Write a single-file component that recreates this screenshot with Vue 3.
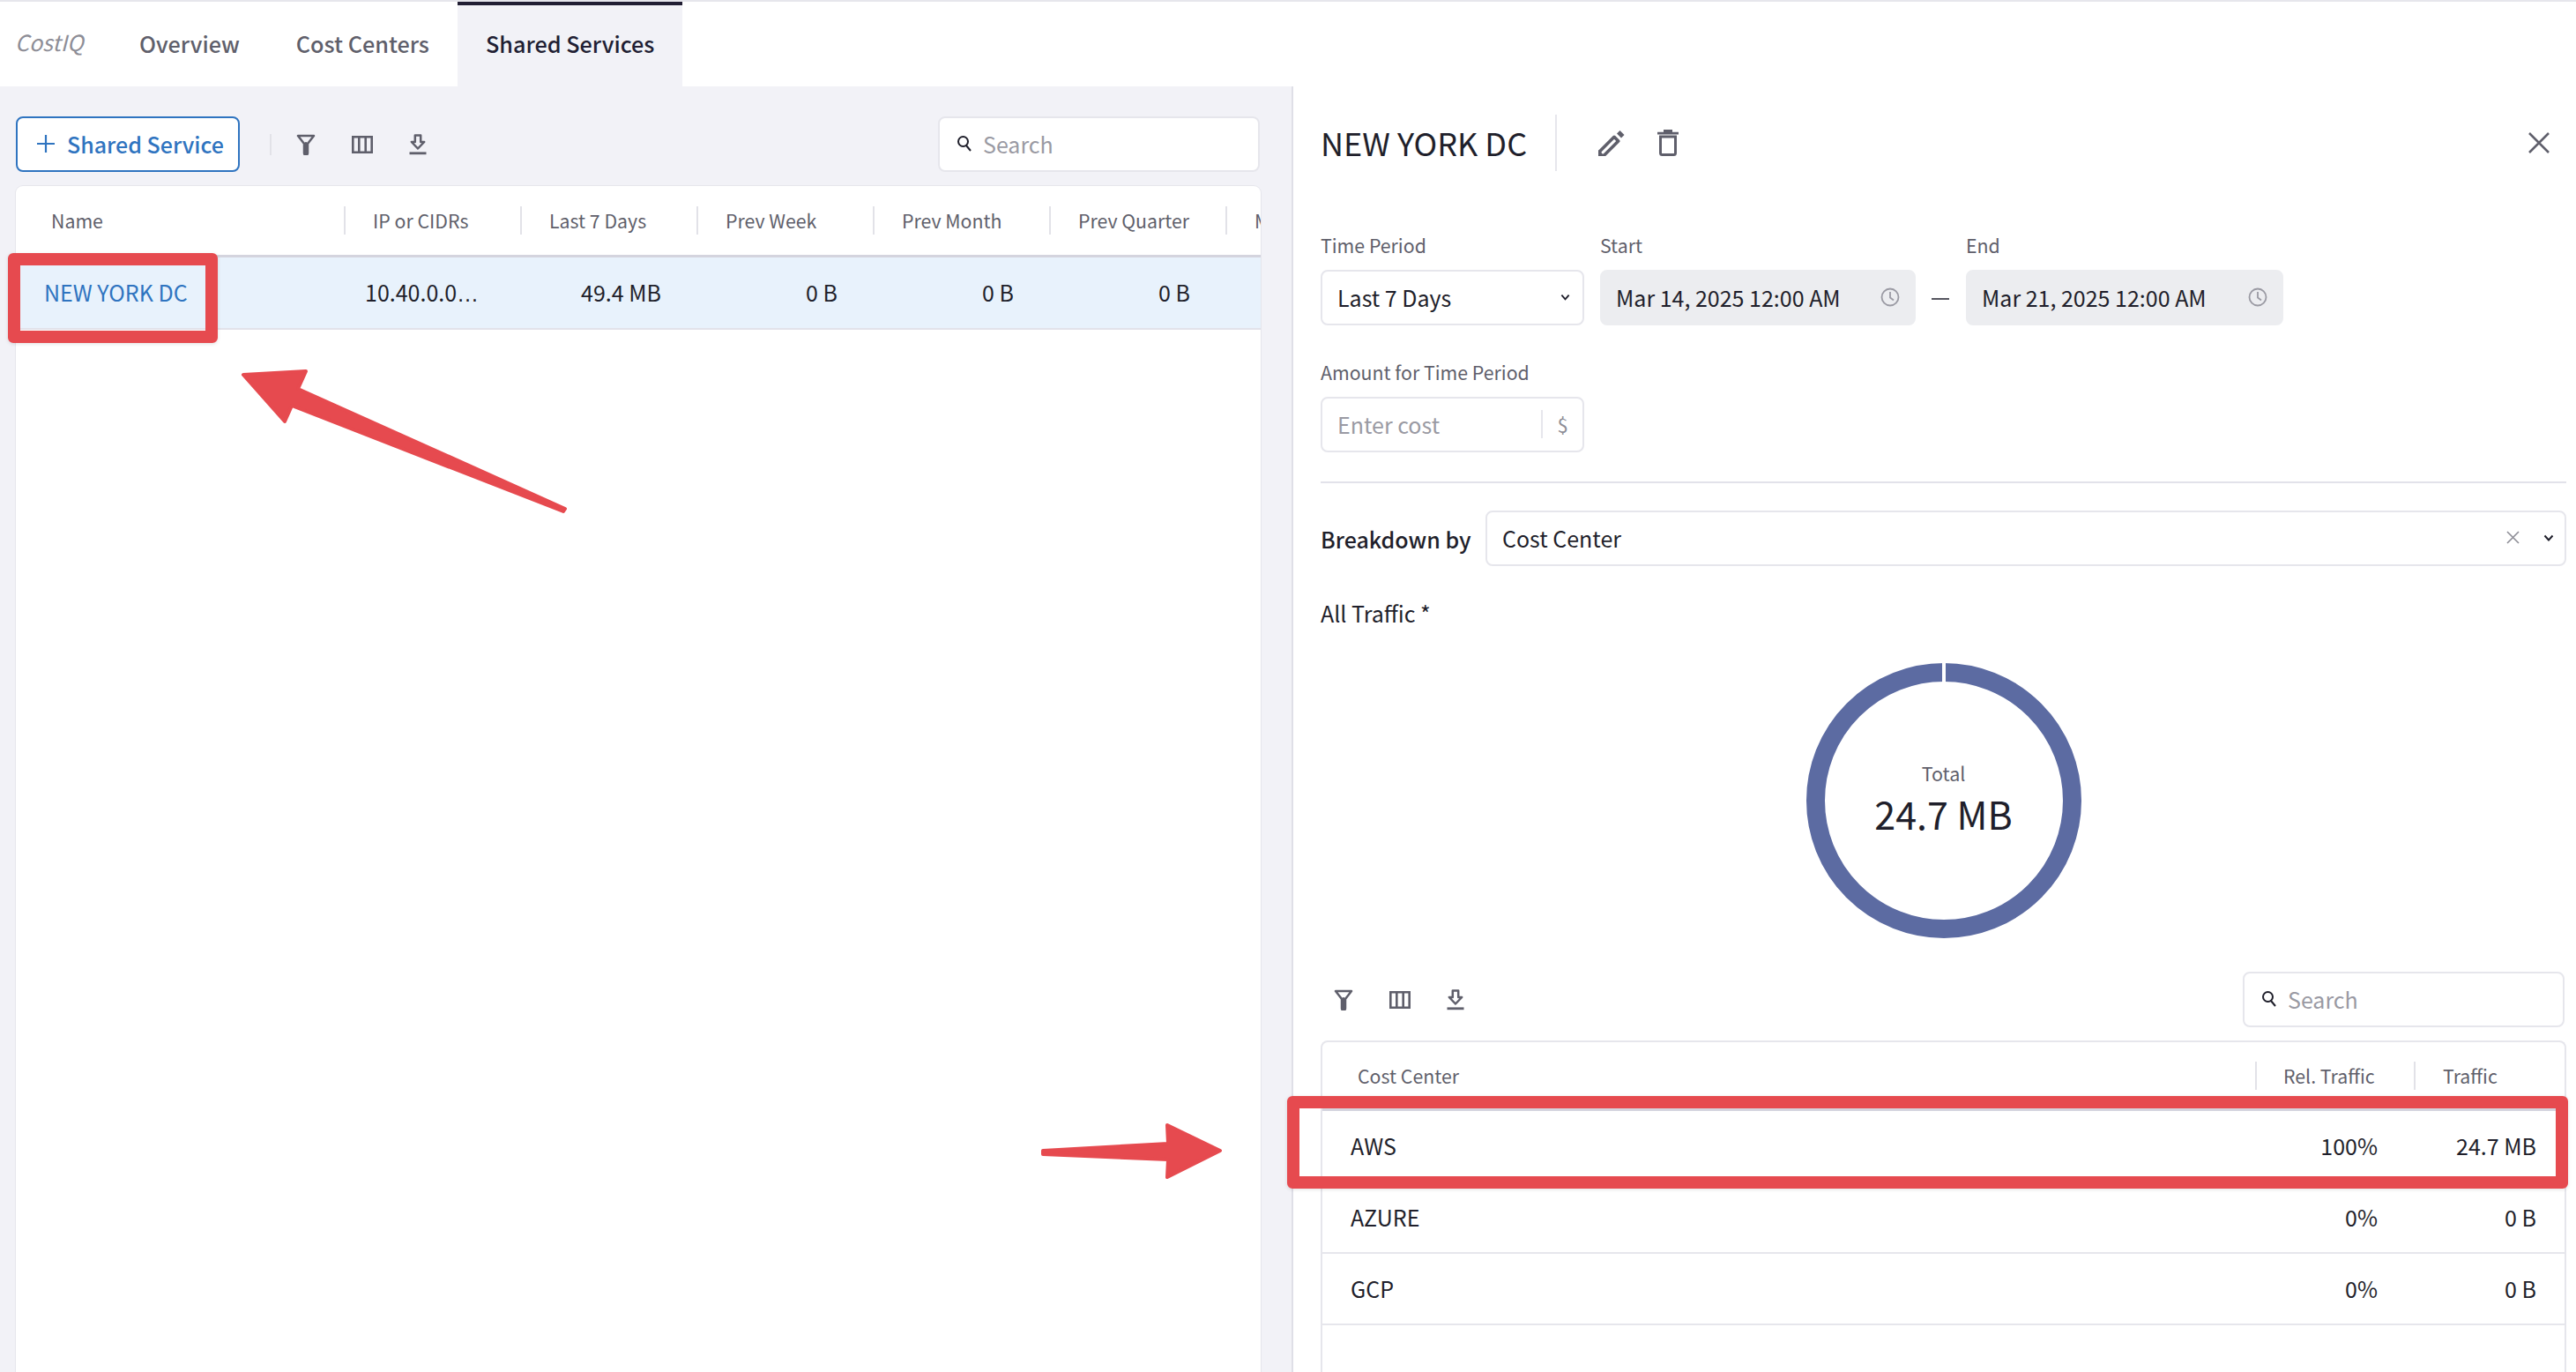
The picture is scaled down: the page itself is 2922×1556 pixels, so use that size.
<template>
  <div class="page">
    <nav class="nav">
      <span class="brand">CostIQ</span>
      <a
        v-for="tab in tabs"
        :key="tab"
        class="tab"
        :class="{ active: tab === 'Shared Services' }"
      >{{ tab }}</a>
    </nav>

    <div class="body">
      <section class="left">
        <div class="toolbar">
          <button class="add-btn">
            <svg width="20" height="20" viewBox="0 0 20 20"><path d="M10 0v20M0 10h20" stroke="#2f74c0" stroke-width="2.200" /></svg>
            <span>Shared Service</span>
          </button>
          <span class="tool-divider"></span>
          <div class="tools">
            <svg class="tool" width="22" height="24" viewBox="0 0 22 24"><path d="M2 2h18l-7 9v10.500a2 2 0 0 1-4 0V11z" fill="none" stroke="#5f5f6b" stroke-width="2.500" stroke-linejoin="round" /><path d="M11 11v11" stroke="#5f5f6b" stroke-width="4" stroke-linecap="round" /></svg>
            <svg class="tool" width="24" height="20" viewBox="0 0 24 20"><path d="M1.300 1.300h21.400v17.400H1.300zM8.300 1v18M15.700 1v18" fill="none" stroke="#5f5f6b" stroke-width="2.600" /></svg>
            <svg class="tool" width="20" height="24" viewBox="0 0 20 24"><path d="M6.800 1.500h6.400v7.500h4L10 16.500 2.800 9h4z" fill="none" stroke="#5f5f6b" stroke-width="2.500" stroke-linejoin="round" /><path d="M0.500 21.800h19" stroke="#5f5f6b" stroke-width="2.800" /></svg>
          </div>
          <div class="search filled">
            <svg width="18" height="20" viewBox="0 0 18 20"><circle cx="7.500" cy="7.500" r="5.500" fill="none" stroke="#1f1f2b" stroke-width="2" /><path d="M11 12l5 6" stroke="#1f1f2b" stroke-width="2" /></svg>
            <span>Search</span>
          </div>
        </div>

        <div class="services">
          <div class="services-head">
            <div v-for="col in serviceCols" :key="col" class="svc-col">{{ col }}</div>
          </div>
          <div class="services-row">
            <div class="svc-name"><a>NEW YORK DC</a><span class="mark mark-name"></span></div>
            <div class="svc-ip">10.40.0.0<span class="ellipsis">…</span></div>
            <div v-for="(v, i) in serviceValues" :key="i" class="svc-val">{{ v }}</div>
          </div>
        </div>
      </section>

      <section class="right">
        <header class="title-row">
          <h1>NEW YORK DC</h1>
          <span class="title-divider"></span>
          <svg class="pencil" width="30" height="30" viewBox="0 0 30 30"><path d="M1.800 24.500L18 8.300l4.700 4.700L6.500 29.200 1.800 29.200z" fill="none" stroke="#5f5f6b" stroke-width="3.600" stroke-linejoin="round" /><path d="M0 30v-7l7 7z" fill="#5f5f6b" /><path d="M21 4.500L24.500 1 29.500 6 26 9.500z" fill="#5f5f6b" /></svg>
          <svg class="trash" width="24" height="30" viewBox="0 0 24 30"><path d="M3.500 8h17v18.500a2 2 0 0 1-2 2h-13a2 2 0 0 1-2-2z" fill="none" stroke="#5f5f6b" stroke-width="3" /><path d="M0 4.200h24M7 1.500h10" stroke="#5f5f6b" stroke-width="2.800" /></svg>
          <svg class="close" width="24" height="24" viewBox="0 0 24 24"><path d="M1 1l22 22M23 1L1 23" stroke="#5f5f6b" stroke-width="2.500" /></svg>
        </header>

        <div class="period">
          <label class="field">
            <span class="label">Time Period</span>
            <div class="box select-box">
              <span>Last 7 Days</span>
              <svg width="11" height="8" viewBox="0 0 12 8"><path d="M1.500 1.500L6 6.500l4.500-5" fill="none" stroke="#1f1f2b" stroke-width="2" /></svg>
            </div>
          </label>
          <label class="field">
            <span class="label">Start</span>
            <div class="box date-box">
              <span>Mar 14, 2025 12:00 AM</span>
              <svg width="22" height="22" viewBox="0 0 22 22"><circle cx="11" cy="11" r="9.500" fill="none" stroke="#9a9aa3" stroke-width="1.800" /><path d="M11 5v6.500l4 3" fill="none" stroke="#9a9aa3" stroke-width="1.800" /></svg>
            </div>
          </label>
          <span class="dash"></span>
          <label class="field">
            <span class="label">End</span>
            <div class="box date-box end">
              <span>Mar 21, 2025 12:00 AM</span>
              <svg width="22" height="22" viewBox="0 0 22 22"><circle cx="11" cy="11" r="9.500" fill="none" stroke="#9a9aa3" stroke-width="1.800" /><path d="M11 5v6.500l4 3" fill="none" stroke="#9a9aa3" stroke-width="1.800" /></svg>
            </div>
          </label>
        </div>

        <label class="field amount">
          <span class="label">Amount for Time Period</span>
          <div class="box cost-box">
            <span class="placeholder">Enter cost</span>
            <span class="unit">$</span>
          </div>
        </label>

        <hr class="rule" />

        <div class="breakdown">
          <span class="breakdown-label">Breakdown by</span>
          <div class="box breakdown-box">
            <span>Cost Center</span>
            <svg class="clear" width="15" height="15" viewBox="0 0 15 15"><path d="M1 1l13 13M14 1L1 14" stroke="#8d8d96" stroke-width="1.600" /></svg>
            <svg width="12" height="8" viewBox="0 0 12 8"><path d="M1.500 1.500L6 6.500l4.500-5" fill="none" stroke="#1f1f2b" stroke-width="2" /></svg>
          </div>
        </div>

        <div class="traffic-label">All Traffic *</div>

        <div class="donut">
          <svg width="312" height="312" viewBox="0 0 312 312">
            <circle cx="156" cy="156" r="145.500" fill="none" stroke="#5c6ba2" stroke-width="21" />
            <rect x="154" y="0" width="4" height="22" fill="#fff" />
          </svg>
          <div class="donut-text">
            <div class="donut-label">Total</div>
            <div class="donut-value">24.7 MB</div>
          </div>
        </div>

        <div class="toolbar sub">
          <div class="tools">
            <svg class="tool" width="22" height="24" viewBox="0 0 22 24"><path d="M2 2h18l-7 9v10.500a2 2 0 0 1-4 0V11z" fill="none" stroke="#5f5f6b" stroke-width="2.500" stroke-linejoin="round" /><path d="M11 11v11" stroke="#5f5f6b" stroke-width="4" stroke-linecap="round" /></svg>
            <svg class="tool" width="24" height="20" viewBox="0 0 24 20"><path d="M1.300 1.300h21.400v17.400H1.300zM8.300 1v18M15.700 1v18" fill="none" stroke="#5f5f6b" stroke-width="2.600" /></svg>
            <svg class="tool" width="20" height="24" viewBox="0 0 20 24"><path d="M6.800 1.500h6.400v7.500h4L10 16.500 2.800 9h4z" fill="none" stroke="#5f5f6b" stroke-width="2.500" stroke-linejoin="round" /><path d="M0.500 21.800h19" stroke="#5f5f6b" stroke-width="2.800" /></svg>
          </div>
          <div class="search">
            <svg width="18" height="20" viewBox="0 0 18 20"><circle cx="7.500" cy="7.500" r="5.500" fill="none" stroke="#1f1f2b" stroke-width="2" /><path d="M11 12l5 6" stroke="#1f1f2b" stroke-width="2" /></svg>
            <span>Search</span>
          </div>
        </div>

        <div class="centers">
          <div class="centers-head">
            <div class="cc-name">Cost Center</div>
            <div class="cc-rel">Rel. Traffic</div>
            <div class="cc-traffic">Traffic</div>
          </div>
          <div v-for="row in centers" :key="row.name" class="centers-row">
            <div class="cc-cell-name">{{ row.name }}</div>
            <div class="cc-cell-rel">{{ row.rel }}</div>
            <div class="cc-cell-traffic">{{ row.traffic }}</div>
            <span v-if="row.name === 'AWS'" class="mark mark-row"></span>
          </div>
        </div>
      </section>
    </div>

    <!-- callout arrows from the annotated screenshot -->
    <svg class="arrows" width="2922" height="1556" viewBox="0 0 2922 1556">
      <path d="M276 425L347 421 338 441 641 577 639 580 331 460 323 478z" fill="#e64a4f" stroke="#e64a4f" stroke-width="4" stroke-linejoin="round" />
      <path d="M1183 1305L1325 1297 1324 1276 1384 1305 1324 1335 1325 1315 1183 1309z" fill="#e64a4f" stroke="#e64a4f" stroke-width="4" stroke-linejoin="round" />
    </svg>
  </div>
</template>

<script setup>
const tabs = ["Overview", "Cost Centers", "Shared Services"];

const serviceCols = [
  "Name",
  "IP or CIDRs",
  "Last 7 Days",
  "Prev Week",
  "Prev Month",
  "Prev Quarter",
  "Max",
];

const serviceValues = ["49.4 MB", "0 B", "0 B", "0 B"];

const centers = [
  { name: "AWS", rel: "100%", traffic: "24.7 MB" },
  { name: "AZURE", rel: "0%", traffic: "0 B" },
  { name: "GCP", rel: "0%", traffic: "0 B" },
];
</script>

<style>
html,
body {
  margin: 0;
  background: #fff;
}
</style>

<style scoped>
.page {
  position: relative;
  width: 2922px;
  height: 1556px;
  overflow: hidden;
  display: flex;
  flex-direction: column;
  background: #fff;
  color: #1f1f2b;
  font-family: "Noto Sans CJK SC", "Liberation Sans", sans-serif;
  font-size: 25px;
}

.nav {
  display: flex;
  height: 96px;
  margin-top: 2px;
  flex-shrink: 0;
  box-shadow: 0 -2px 0 #e6e6ec;
  align-items: stretch;
}

.brand {
  width: 126px;
  padding-left: 17px;
  box-sizing: border-box;
  line-height: 90px;
  font-style: italic;
  color: #8d8d96;
  font-size: 25px;
}

.tab {
  padding: 0 32px;
  line-height: 87px;
  font-size: 25.200px;
  font-weight: 500;
  color: #5f5f6b;
  border-top: 4px solid transparent;
}

.tab.active {
  background: #f2f2f7;
  border-top-color: #211e33;
  color: #211e33;
}

.body {
  flex: 1;
  display: flex;
  min-height: 0;
}

.left {
  width: 1467px;
  flex-shrink: 0;
  box-sizing: border-box;
  padding: 34px 36px 0 18px;
  background: #f2f2f7;
  border-right: 2px solid #dfdfe7;
  display: flex;
  flex-direction: column;
}

.toolbar {
  display: flex;
  align-items: center;
  height: 63px;
}

.add-btn {
  display: flex;
  align-items: center;
  gap: 14px;
  width: 254px;
  height: 63px;
  box-sizing: border-box;
  border: 2px solid #2f74c0;
  border-radius: 8px;
  background: #fff;
  color: #2f74c0;
  font: 500 25px "Noto Sans CJK SC", sans-serif;
  padding: 0 0 2px 22px;
  white-space: nowrap;
}

.tool-divider {
  width: 2px;
  height: 24px;
  margin-left: 34px;
  margin-right: 28px;
  background: #e2e2e8;
}

.tools {
  display: flex;
  align-items: center;
  gap: 41px;
}

.search {
  margin-left: auto;
  width: 365px;
  height: 63px;
  box-sizing: border-box;
  border: 2px solid #e6e6ec;
  border-radius: 8px;
  background: #fff;
  display: flex;
  align-items: center;
  gap: 12px;
  padding: 0 0 2px 19px;
  color: #9a9aa3;
  font-size: 25px;
}

.services {
  flex: 1;
  margin-top: 16px;
  background: #fff;
  border-radius: 8px 8px 0 0;
  box-shadow: 0 0 0 1px #e6e6ec;
  width: 1412px;
}

.services-head {
  display: flex;
  height: 78px;
  align-items: center;
  border-bottom: 3px solid #d4d4de;
  overflow: hidden;
}

.svc-col {
  width: 200px;
  flex-shrink: 0;
  box-sizing: border-box;
  padding-left: 31px;
  font-size: 21.300px;
  color: #5f5f6b;
  border-left: 2px solid #e2e2e8;
  height: 32px;
  line-height: 32px;
  white-space: nowrap;
}

.svc-col:first-child {
  width: 372px;
  padding-left: 40px;
  border-left: 0;
}

.services-row {
  display: flex;
  height: 80px;
  align-items: center;
  background: #e8f2fc;
  border-bottom: 2px solid #e2e2ea;
}

.svc-name {
  position: relative;
  width: 372px;
  box-sizing: border-box;
  padding-left: 32px;
  color: #2f74c0;
  align-self: stretch;
  line-height: 78px;
}

.svc-ip {
  width: 200px;
  box-sizing: border-box;
  padding: 0 0 3px 24px;
}

.ellipsis {
  font-family: "Liberation Sans", sans-serif;
  letter-spacing: 2px;
}

.svc-val {
  width: 200px;
  box-sizing: border-box;
  padding: 0 40px 3px 0;
  text-align: right;
}

.mark {
  position: absolute;
  box-sizing: border-box;
  border: 14px solid #e64a4f;
  border-radius: 6px;
  pointer-events: none;
  box-shadow: 0 1px 4px rgba(0, 0, 0, 0.12);
}

.mark-name {
  left: -9px;
  top: -5px;
  width: 238px;
  height: 102px;
}

.right {
  flex: 1;
  min-width: 0;
  box-sizing: border-box;
  padding: 0 11px 0 31px;
  display: flex;
  flex-direction: column;
}

.title-row {
  display: flex;
  align-items: center;
  height: 64px;
  margin-top: 32px;
}

.title-row h1 {
  width: 233px;
  margin: 0 0 2px;
  font-size: 36px;
  font-weight: 400;
  white-space: nowrap;
}

.title-divider {
  width: 2px;
  height: 64px;
  margin-left: 33px;
  background: #e6e6ec;
}

.pencil {
  margin-left: 47px;
}

.trash {
  margin-left: 37px;
}

.close {
  margin-left: auto;
  margin-right: 19px;
}

.period {
  display: flex;
  align-items: flex-end;
  margin-top: 67px;
}

.field {
  display: flex;
  flex-direction: column;
  gap: 12px;
}

.label {
  font-size: 21.300px;
  line-height: 33px;
  color: #5f5f6b;
}

.box {
  display: flex;
  align-items: center;
  height: 63px;
  box-sizing: border-box;
  padding-bottom: 2px;
  border: 2px solid #e6e6ec;
  border-radius: 8px;
  background: #fff;
}

.select-box {
  width: 299px;
  padding: 0 14px 2px 17px;
  justify-content: space-between;
  margin-right: 18px;
}

.date-box {
  width: 358px;
  padding: 0 16px 2px 16px;
  justify-content: space-between;
  background: #ecedf0;
  border-color: #ecedf0;
}

.date-box.end {
  width: 360px;
}

.dash {
  width: 20px;
  height: 2px;
  margin: 0 19px 29px 18px;
  background: #55555f;
}

.amount {
  margin-top: 36px;
}

.cost-box {
  width: 299px;
  padding-left: 17px;
  position: relative;
}

.placeholder {
  color: #9a9aa3;
  flex: 1;
}

.unit {
  width: 45px;
  border-left: 2px solid #e6e6ec;
  color: #8d8d96;
  font-size: 22px;
  text-align: center;
  line-height: 32px;
}

.rule {
  border: 0;
  height: 2px;
  margin: 33px 0 0;
  background: #e2e2ea;
  flex-shrink: 0;
}

.breakdown {
  display: flex;
  align-items: center;
  margin-top: 31px;
}

.breakdown-label {
  width: 187px;
  font-weight: 500;
}

.breakdown-box {
  flex: 1;
  padding: 0 12px 2px 17px;
}

.breakdown-box span {
  flex: 1;
}

.clear {
  margin-right: 27px;
}

.traffic-label {
  margin-top: 35px;
  line-height: 36px;
}

.donut {
  position: relative;
  align-self: center;
  width: 312px;
  height: 312px;
  margin-top: 39px;
  flex-shrink: 0;
}

.donut svg {
  display: block;
}

.donut-text {
  position: absolute;
  inset: 0;
  padding-bottom: 6px;
  display: flex;
  flex-direction: column;
  align-items: center;
  justify-content: center;
}

.donut-label {
  font-size: 21.500px;
  line-height: 34px;
  color: #5f5f6b;
}

.donut-value {
  font-size: 43px;
  line-height: 56px;
}

.sub {
  margin-top: 38px;
  flex-shrink: 0;
}

.sub .tools {
  padding-left: 15px;
}

.sub .search {
  margin-right: 2px;
}

.centers {
  flex: 1;
  margin-top: 15px;
  border: 2px solid #e6e6ec;
  border-bottom: 0;
  border-radius: 8px 8px 0 0;
}

.centers-head {
  display: flex;
  height: 75px;
  align-items: center;
  font-size: 21.300px;
  color: #5f5f6b;
  border-bottom: 3px solid #d4d4de;
}

.centers-head > div {
  box-sizing: border-box;
  height: 32px;
  line-height: 32px;
}

.cc-name {
  flex: 1;
  padding-left: 40px;
}

.cc-rel {
  width: 180px;
  padding-left: 30px;
  border-left: 2px solid #e2e2e8;
}

.cc-traffic {
  width: 171px;
  padding-left: 31px;
  border-left: 2px solid #e2e2e8;
}

.centers-row {
  position: relative;
  display: flex;
  align-items: center;
  height: 79px;
  padding-bottom: 2px;
  box-sizing: content-box;
  height: 77px;
  border-bottom: 2px solid #e6e6ec;
}

.cc-cell-name {
  flex: 1;
  padding-left: 32px;
}

.cc-cell-rel {
  width: 200px;
  text-align: right;
  box-sizing: border-box;
}

.cc-cell-traffic {
  width: 212px;
  text-align: right;
  padding-right: 32px;
  box-sizing: border-box;
}

.mark-row {
  left: -40px;
  top: -17px;
  width: 1453px;
  height: 105px;
}

.arrows {
  position: absolute;
  left: 0;
  top: 0;
  pointer-events: none;
}
</style>
